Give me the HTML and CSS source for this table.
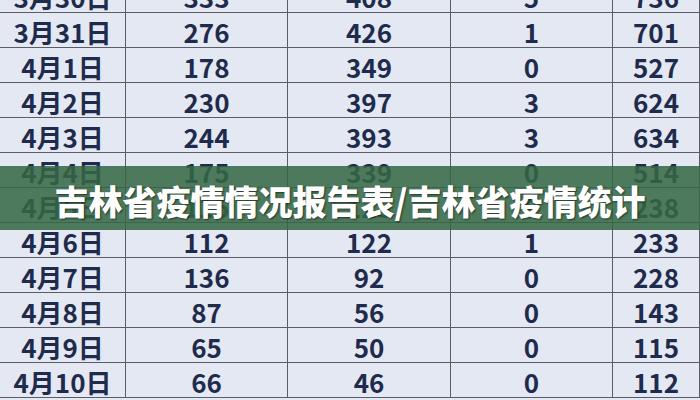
FILE: index.html
```html
<!DOCTYPE html>
<html lang="zh">
<head>
<meta charset="utf-8">
<title>吉林省疫情统计</title>
<link rel="stylesheet" href="styles.css">
</head>
<body>
<div class="page">
  <div class="table">
    <div class="row"><div class="c c1">3月30日</div><div class="c c2">333</div><div class="c c3">408</div><div class="c c4">5</div><div class="c c5">736</div></div>
    <div class="row"><div class="c c1">3月31日</div><div class="c c2">276</div><div class="c c3">426</div><div class="c c4">1</div><div class="c c5">701</div></div>
    <div class="row"><div class="c c1">4月1日</div><div class="c c2">178</div><div class="c c3">349</div><div class="c c4">0</div><div class="c c5">527</div></div>
    <div class="row"><div class="c c1">4月2日</div><div class="c c2">230</div><div class="c c3">397</div><div class="c c4">3</div><div class="c c5">624</div></div>
    <div class="row"><div class="c c1">4月3日</div><div class="c c2">244</div><div class="c c3">393</div><div class="c c4">3</div><div class="c c5">634</div></div>
    <div class="row"><div class="c c1">4月4日</div><div class="c c2">175</div><div class="c c3">339</div><div class="c c4">0</div><div class="c c5">514</div></div>
    <div class="row"><div class="c c1">4月5日</div><div class="c c2">115</div><div class="c c3">123</div><div class="c c4">0</div><div class="c c5">238</div></div>
    <div class="row"><div class="c c1">4月6日</div><div class="c c2">112</div><div class="c c3">122</div><div class="c c4">1</div><div class="c c5">233</div></div>
    <div class="row"><div class="c c1">4月7日</div><div class="c c2">136</div><div class="c c3">92</div><div class="c c4">0</div><div class="c c5">228</div></div>
    <div class="row"><div class="c c1">4月8日</div><div class="c c2">87</div><div class="c c3">56</div><div class="c c4">0</div><div class="c c5">143</div></div>
    <div class="row"><div class="c c1">4月9日</div><div class="c c2">65</div><div class="c c3">50</div><div class="c c4">0</div><div class="c c5">115</div></div>
    <div class="row"><div class="c c1">4月10日</div><div class="c c2">66</div><div class="c c3">46</div><div class="c c4">0</div><div class="c c5">112</div></div>
  </div>
  <div class="banner"><h1 class="title">吉林省疫情情况报告表/吉林省疫情统计</h1></div>
</div>
</body>
</html>
```
FILE: styles.css
```css
html, body {
  margin: 0;
  padding: 0;
}
body {
  width: 700px;
  height: 400px;
  overflow: hidden;
  background: #e4e8f2;
  font-family: "Noto Sans CJK SC", "Noto Sans", sans-serif;
}
.page {
  position: relative;
  width: 700px;
  height: 400px;
  overflow: hidden;
}
.table {
  margin-top: -22px;
  margin-left: -1px;
  display: flex;
  flex-direction: column;
}
.row {
  display: grid;
  grid-template-columns: 127px 162px 163px 162px 87px;
  height: 35px;
  border-bottom: 1px solid #5a5d68;
  box-sizing: border-box;
}
.row:first-child {
  border-top: 1px solid #5a5d68;
}
.c {
  display: flex;
  align-items: center;
  justify-content: center;
  padding-top: 3px;
  border-right: 1px solid #5a5d68;
  color: #1f2b4c;
  font-size: 26px;
  font-weight: 700;
  line-height: 1;
}
.c1 {
  border-left: 1px solid #5a5d68;
}
.banner {
  position: absolute;
  left: 0;
  top: 166px;
  width: 700px;
  height: 64px;
  background: rgba(52, 102, 68, 0.86);
  display: flex;
  align-items: center;
  justify-content: center;
}
.title {
  margin: 0;
  padding-top: 6px;
  color: #ffffff;
  font-size: 34px;
  font-weight: 900;
  line-height: 1;
  letter-spacing: 0;
  text-shadow: 1px 1px 2px rgba(0, 0, 0, 0.55);
}
```
